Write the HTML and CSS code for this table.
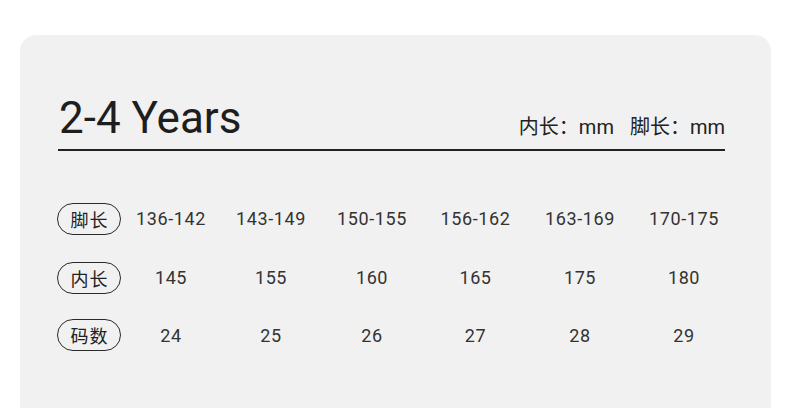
FILE: index.html
```html
<!DOCTYPE html>
<html lang="zh">
<head>
<meta charset="utf-8">
<title>2-4 Years</title>
<link rel="stylesheet" href="styles.css">
</head>
<body>
<div class="card">
  <div class="header">
    <h1 class="title">2-4 Years</h1>
    <div class="units"><span>内长：mm</span><span>脚长：mm</span></div>
  </div>
  <div class="table">
    <div class="row r1">
      <span class="pill">脚长</span>
      <span class="cell">136-142</span><span class="cell">143-149</span><span class="cell">150-155</span><span class="cell">156-162</span><span class="cell">163-169</span><span class="cell">170-175</span>
    </div>
    <div class="row r2">
      <span class="pill">内长</span>
      <span class="cell">145</span><span class="cell">155</span><span class="cell">160</span><span class="cell">165</span><span class="cell">175</span><span class="cell">180</span>
    </div>
    <div class="row r3">
      <span class="pill">码数</span>
      <span class="cell">24</span><span class="cell">25</span><span class="cell">26</span><span class="cell">27</span><span class="cell">28</span><span class="cell">29</span>
    </div>
  </div>
</div>
</body>
</html>
```
FILE: styles.css
```css
html, body {
  margin: 0;
  padding: 0;
  background: #ffffff;
}
body {
  width: 790px;
  height: 408px;
  overflow: hidden;
  font-family: Roboto, "Noto Sans CJK SC", sans-serif;
  color: #222;
}
.card {
  margin: 35px 0 0 20px;
  width: 751px;
  height: 373px;
  background: #f1f1f1;
  border-radius: 16px 16px 0 0;
  padding: 0 46px 0 38px;
  box-sizing: border-box;
}
.header {
  display: flex;
  justify-content: space-between;
  align-items: flex-end;
  padding-top: 57px;
  padding-bottom: 5px;
  border-bottom: 2px solid #222;
}
.title {
  margin: 0;
  font-weight: 400;
  font-size: 44px;
  line-height: 52px;
  color: #1e1e1e;
  margin-left: 1px;
}
.units {
  display: flex;
  gap: 16px;
  font-size: 20px;
  line-height: 24px;
  margin-bottom: 5px;
  color: #222;
}
.table {
  display: flex;
  flex-direction: column;
}
.row {
  display: grid;
  grid-template-columns: 63px 100px 100px 102px 105px 104px 104px;
  align-items: center;
  height: 32px;
}
.r1 { margin-top: 52px; }
.r2 { margin-top: 27px; }
.r3 { margin-top: 23px; }
.pill {
  box-sizing: border-box;
  height: 32px;
  border: 1.3px solid #2a2a2a;
  border-radius: 16px;
  display: flex;
  align-items: center;
  justify-content: center;
  font-size: 18px;
  letter-spacing: 1px;
  padding-left: 1px;
  color: #222;
  margin-left: -1px;
}
.cell {
  text-align: center;
  font-size: 18px;
  letter-spacing: 0.6px;
  color: #333;
  line-height: 32px;
}
.r3 .cell { padding-top: 3px; }
```
